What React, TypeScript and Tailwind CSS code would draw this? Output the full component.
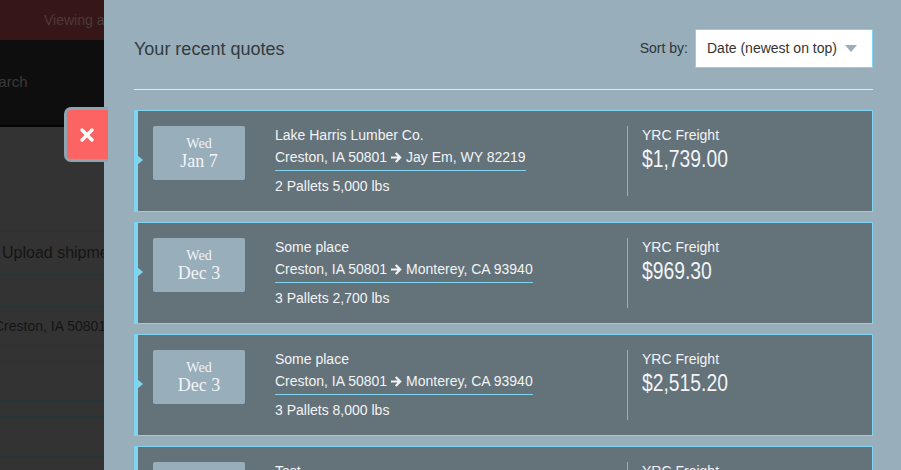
import { X } from "lucide-react";

type Quote = {
  id: number;
  day: string;
  date: string;
  name: string;
  from: string;
  to: string;
  load: string;
  carrier: string;
  price: string;
};

const QUOTES: Quote[] = [
  { id: 1, day: "Wed", date: "Jan 7", name: "Lake Harris Lumber Co.", from: "Creston, IA 50801", to: "Jay Em, WY 82219", load: "2 Pallets 5,000 lbs", carrier: "YRC Freight", price: "$1,739.00" },
  { id: 2, day: "Wed", date: "Dec 3", name: "Some place", from: "Creston, IA 50801", to: "Monterey, CA 93940", load: "3 Pallets 2,700 lbs", carrier: "YRC Freight", price: "$969.30" },
  { id: 3, day: "Wed", date: "Dec 3", name: "Some place", from: "Creston, IA 50801", to: "Monterey, CA 93940", load: "3 Pallets 8,000 lbs", carrier: "YRC Freight", price: "$2,515.20" },
  { id: 4, day: "Wed", date: "Dec 3", name: "Test", from: "Creston, IA 50801", to: "Monterey, CA 93940", load: "1 Pallet 1,000 lbs", carrier: "YRC Freight", price: "$812.40" },
];

// bold right arrow, like the icon-font one in the route line
function RouteArrow() {
  return (
    <svg width="11" height="11" viewBox="0 0 12 12" className="mx-[4px] inline-block align-[-1px]">
      <path d="M1 6h8.5M6 2l4 4-4 4" fill="none" stroke="currentColor" strokeWidth="2.4" strokeLinecap="square" />
    </svg>
  );
}

function QuoteCard({ quote }: { quote: Quote }) {
  return (
    <div className="relative flex h-[102px] shrink-0 border border-l-4 border-[#7fd5f0] bg-[#64727a] pl-[15px] pt-[15px]">
      {/* little pointer on the left edge */}
      <span className="absolute left-[-1px] top-[44px] h-0 w-0 border-y-[5px] border-l-[6px] border-y-transparent border-l-[#7fd5f0]" />

      <div className="flex h-[54px] w-[92px] shrink-0 flex-col items-center justify-center rounded-[2px] bg-[#98aebb] font-['Liberation_Serif',serif] text-[#f3f5f6]">
        <span className="text-[14px] leading-[16px]">{quote.day}</span>
        <span className="text-[18px] leading-[19px]">{quote.date}</span>
      </div>

      <div className="ml-[30px] w-[352px] shrink-0 text-[14px] text-[#f2f4f5]">
        <div className="leading-[19px]">{quote.name}</div>
        <div className="mt-[3px] w-fit border-b border-[#7fd5f0] pb-[3px] leading-[19px]">
          {quote.from}
          <RouteArrow />
          {quote.to}
        </div>
        <div className="mt-[6px] leading-[19px]">{quote.load}</div>
      </div>

      <div className="flex h-[70px] flex-col border-l border-[#98aebb] pl-[14px] text-[#f2f4f5]">
        <span className="text-[14px] leading-[19px]">{quote.carrier}</span>
        <span className="mt-[1px] inline-block origin-left scale-x-[0.84] whitespace-nowrap text-[23px] leading-[26px]">
          {quote.price}
        </span>
      </div>
    </div>
  );
}

export default function App() {
  return (
    <div className="relative flex h-[470px] w-[901px] overflow-hidden font-['Liberation_Sans',Arial,sans-serif]">
      {/* Dimmed page behind the drawer */}
      <div className="flex w-[104px] shrink-0 flex-col overflow-hidden whitespace-nowrap bg-[#333333]">
        <div className="flex h-[40px] shrink-0 items-center bg-[#361616] pl-[44px] text-[14px] text-[#4e3a3a]">
          Viewing as
        </div>
        <div className="flex h-[87px] shrink-0 items-center border-b-2 border-[#050505] bg-[#0e0e0e] text-[15px] text-[#3a3a3a]">
          <span className="-ml-[20px]">Search</span>
        </div>
        <div className="h-[105px] shrink-0 border-b border-[#24363c]" />
        <div className="flex h-[43px] shrink-0 items-center border-b border-[#24363c] pl-[2px] text-[16px] text-[#151515]">
          Upload shipments
        </div>
        <div className="h-[32px] shrink-0 border-b border-[#24363c]" />
        <div className="flex h-[39px] shrink-0 items-center border-b border-[#24363c] text-[14px] text-[#151515]">
          <span className="-ml-[6px]">Creston, IA 50801</span>
        </div>
        <div className="h-[16px] shrink-0 border-b border-[#24363c]" />
        <div className="h-[39px] shrink-0 border-b border-[#24363c]" />
        <div className="h-[16px] shrink-0 border-b border-[#24363c]" />
        <div className="h-[40px] shrink-0 border-b border-[#24363c]" />
      </div>

      {/* Close tab */}
      <button className="absolute left-[64px] top-[107px] flex h-[55px] w-[44px] items-center justify-start rounded-l-[7px] border-[3px] border-r-0 border-[#8ea4b0] bg-[#fc6464] pl-[10px] text-white">
        <X size={20} strokeWidth={4} />
      </button>

      {/* Drawer */}
      <div className="flex flex-1 flex-col bg-[#98aebb] pl-[30px] pr-[28px] pt-[29px]">
        <div className="flex h-[39px] shrink-0 items-center justify-between">
          <h2 className="mt-[2px] text-[18px] text-[#333a3e]">Your recent quotes</h2>
          <div className="flex items-center">
            <span className="mr-[7px] text-[14px] text-[#2f3538]">Sort by:</span>
            <div className="flex h-[39px] w-[178px] items-center justify-between border border-[#7fd5f0] bg-white pl-[11px] pr-[15px] text-[14px] text-[#333]">
              <span>Date (newest on top)</span>
              <span className="h-0 w-0 border-x-[6px] border-t-[7px] border-x-transparent border-t-[#98aebb]" />
            </div>
          </div>
        </div>

        <div className="mt-[21px] shrink-0 border-t border-[#e2e8eb]" />

        <div className="mt-[20px] flex flex-col gap-[10px]">
          {QUOTES.map(q => (
            <QuoteCard key={q.id} quote={q} />
          ))}
        </div>
      </div>
    </div>
  );
}
